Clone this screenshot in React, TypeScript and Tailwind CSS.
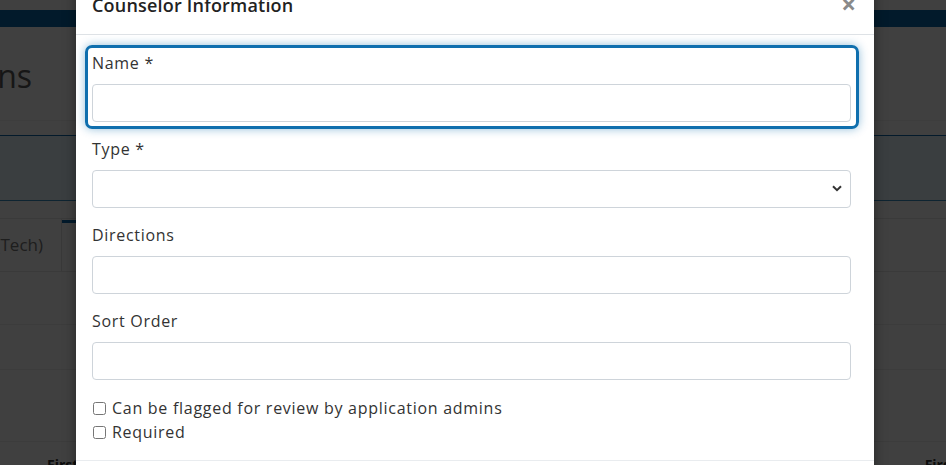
import React from 'react';

const font = { fontFamily: '"Open Sans", "Liberation Sans", sans-serif' };

const Field: React.FC<{ label: string; children: React.ReactNode; className?: string }> = ({ label, children, className }) => (
  <div className={className}>
    <label className="block text-[16px] leading-[24px] tracking-[0.7px] text-[#333] mb-[9px]">{label}</label>
    {children}
  </div>
);

const inputCls = 'block w-full h-[38px] rounded-[4px] border border-[#ced4da] bg-white px-3 text-[16px] text-[#333] outline-none';

const Check: React.FC<{ label: string }> = ({ label }) => (
  <label className="flex items-center h-[24px] text-[16px] tracking-[0.72px] text-[#333]">
    <input type="checkbox" className="w-[13px] h-[13px] ml-[1px] mr-[6px] m-0" />
    {label}
  </label>
);

const BackgroundPage: React.FC = () => (
  <div className="absolute inset-0 bg-white">
    <div className="h-[10px]" />
    <div className="h-[17px] bg-[#0a6aad]" />
    <div className="h-[93px] flex items-center">
      <div className="w-[32px] flex justify-end whitespace-nowrap text-[32px] text-[#5a5a5a] pt-[4px]">Applications</div>
    </div>
    <div className="h-[16px] border-t border-[#f4f4f4] border-b-[1px] border-b-[#0c68ac]" />
    <div className="h-[65px] bg-[#e8f6ff] border-b border-[#3a8fc4]" />
    <div className="h-[17px]" />
    <div className="h-[54px] flex border-t border-[#e8e8e8] border-b border-b-[#e8e8e8]">
      <div className="w-[62px] flex justify-end items-center whitespace-nowrap border-r border-[#e2e2e2] pr-[18px] text-[17px] text-[#777]">Counselor (Tech)</div>
      <div className="w-[640px] border-t-[3px] border-[#0c68ac] mt-[1px] border-r border-r-[#e2e2e2]" />
    </div>
    <div className="h-[53px] border-b border-[#eeeeee]" />
    <div className="h-[45px] border-b border-[#eeeeee]" />
    <div className="h-[72px] border-b border-[#eeeeee]" />
    <div className="flex justify-between pl-[47px] pt-[12px] text-[14px] font-bold text-[#333]">
      <span>First</span>
      <span className="-mr-[10px]">First</span>
    </div>
  </div>
);

export default function App() {
  return (
    <div className="relative w-[946px] h-[465px] overflow-hidden" style={font}>
      <BackgroundPage />
      <div className="absolute inset-0 bg-black/75" />

      {/* modal dialog */}
      <div className="absolute left-[76px] top-[-20px] w-[798px] h-[520px] bg-white shadow-[0_0_12px_rgba(0,0,0,0.4)]">
        <div className="h-[55px] flex items-center justify-between pl-[16px] pr-[18px] border-b border-[#dee2e6]">
          <h5 className="text-[18px] font-semibold tracking-[0.2px] text-[#222] leading-[27px] -mt-[3px]">Counselor Information</h5>
          <button className="text-[26px] leading-none font-bold text-[#8a8a8a] -mt-[6px]">×</button>
        </div>

        <div className="pl-[16px] pr-[23px] pt-[10px]">
          {/* focused group */}
          <div className="-ml-[7px] -mr-[8px] pl-[4px] pr-[5px] pt-[3px] pb-[4px] border-[3px] border-[#0f6fae] rounded-[7px] shadow-[0_0_10px_rgba(15,111,174,0.45)] mb-[8px]">
            <Field label="Name *">
              <input className={inputCls} />
            </Field>
          </div>

          <Field label="Type *" className="mb-[15px]">
            <div className="relative">
              <select className={inputCls + ' appearance-none'}>
                <option></option>
              </select>
              <svg className="absolute right-[9px] top-[15px] w-[10px] h-[7px]" viewBox="0 0 10 7">
                <path d="M1 1.2 L5 5.2 L9 1.2" fill="none" stroke="#333" strokeWidth="2" />
              </svg>
            </div>
          </Field>

          <Field label="Directions" className="mb-[15px]">
            <input className={inputCls} />
          </Field>

          <Field label="Sort Order" className="mb-[16px]">
            <input className={inputCls} />
          </Field>

          <Check label="Can be flagged for review by application admins" />
          <Check label="Required" />
        </div>

        <div className="mt-[16px] border-t border-[#e9ecef]" />
      </div>
    </div>
  );
}
